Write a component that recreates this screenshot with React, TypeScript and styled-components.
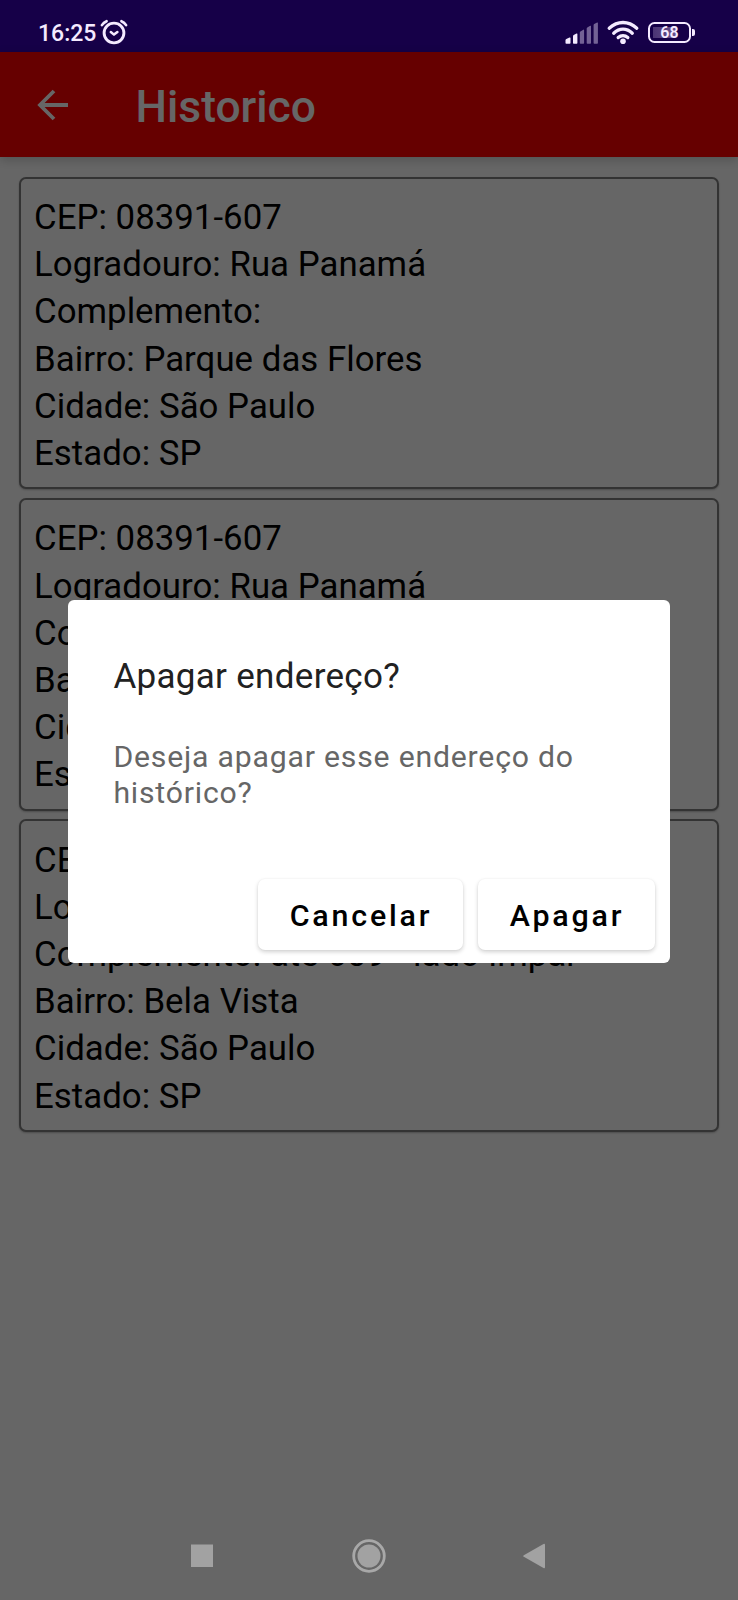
import React from "react";
import styled, { createGlobalStyle } from "styled-components";

const GlobalStyle = createGlobalStyle`
  * { box-sizing: border-box; }
  body { margin: 0; background: #fff; font-family: Roboto, "Liberation Sans", sans-serif; }
  h1, h2, p { margin: 0; font-weight: 400; }
`;

const Screen = styled.div`
  position: relative;
  width: 738px;
  height: 1600px;
  overflow: hidden;
  display: flex;
  flex-direction: column;
  background: #fff;
`;

const StatusBackdrop = styled.div`
  flex: none;
  height: 52px;
  background: #3700b3;
`;

const AppBar = styled.header`
  flex: none;
  height: 105px;
  display: flex;
  align-items: center;
  padding-left: 36px;
  background: #ff0000;
  color: #fff;
  box-shadow: 0 3px 10px rgba(0, 0, 0, 0.2);
`;

const BackIcon = styled.svg`
  width: 34px;
  height: 34px;
  margin-right: 65.5px;
`;

const Title = styled.h1`
  font-size: 44.4px;
  line-height: 50px;
  font-weight: 500;
  padding-top: 5px;
`;

const List = styled.main`
  display: flex;
  flex-direction: column;
  gap: 8.5px;
  padding: 19.5px 19px 0;
`;

const Card = styled.article`
  height: 312.8px;
  padding: 15.5px 13px 0;
  border: 2px solid #808080;
  border-radius: 7px;
  box-shadow: 0 1px 2px rgba(0, 0, 0, 0.25);
  color: #000;
  background: #fff;
`;

const Line = styled.p`
  font-size: 34.8px;
  line-height: 47.2px;
  letter-spacing: 0.02px;
  white-space: nowrap;
`;

const Scrim = styled.div`
  position: absolute;
  inset: 0;
  background: rgba(0, 0, 0, 0.6);
  display: flex;
  justify-content: center;
  align-items: flex-start;
  padding-top: 600px;
`;

const Dialog = styled.section`
  width: 602px;
  height: 363px;
  display: flex;
  flex-direction: column;
  padding: 54px 15px 13px 45.4px;
  border-radius: 6px;
  background: #fff;
`;

const DialogTitle = styled.h2`
  font-size: 35px;
  line-height: 46px;
  letter-spacing: 0.3px;
  color: #212121;
`;

const Message = styled.p`
  margin-top: 39px;
  font-size: 30.2px;
  line-height: 36px;
  letter-spacing: 0.8px;
  color: #666;
`;

const Actions = styled.div`
  margin-top: auto;
  display: flex;
  justify-content: flex-end;
  gap: 15px;
`;

const Action = styled.button<{ $width: number }>`
  width: ${(p) => p.$width}px;
  height: 71px;
  padding: 3px 0 0 1px;
  border: 0;
  border-radius: 7px;
  background: #fff;
  box-shadow: 0 2px 4px rgba(0, 0, 0, 0.18), 0 0 2px rgba(0, 0, 0, 0.05);
  font: 500 30.4px/36px Roboto, sans-serif;
  letter-spacing: 2.8px;
  color: #000;
`;

const StatusBar = styled.div`
  position: absolute;
  inset: 0 0 auto;
  height: 52px;
  display: flex;
  align-items: flex-start;
  padding: 19px 43px 0 38px;
  color: #f4eaff;
`;

const Clock = styled.span`
  font-size: 23px;
  line-height: 30px;
  font-weight: 500;
  width: 62px;
`;

const StatusIcons = styled.div`
  margin-left: auto;
  display: flex;
`;

const NavBar = styled.nav`
  position: absolute;
  inset: auto 0 0;
  height: 90px;
  display: grid;
  grid-template-columns: 161px 171px 22px;
  padding: 28px 0 0 191px;
`;

const addresses = [
  ["08391-607", "Rua Panamá", "", "Parque das Flores", "São Paulo", "SP"],
  ["08391-607", "Rua Panamá", "", "Parque das Flores", "São Paulo", "SP"],
  ["01311-000", "Avenida Paulista", "até 609 - lado ímpar", "Bela Vista", "São Paulo", "SP"],
];
const labels = ["CEP", "Logradouro", "Complemento", "Bairro", "Cidade", "Estado"];

function AlarmIcon() {
  return (
    <svg width="28" height="28" viewBox="0 0 28 28" fill="none" stroke="currentColor" strokeLinecap="round">
      <circle cx="14" cy="14" r="9.9" strokeWidth="2.9" />
      <path d="M10.8 13l3.2 2.6 3.4-2.6" strokeWidth="2.5" strokeLinejoin="round" />
      <path d="M1.9 6.2Q3.6 3.4 6.6 2.2M21.4 2.2q3 1.2 4.7 4" strokeWidth="2.6" />
    </svg>
  );
}

function SignalIcon() {
  return (
    <svg width="42" height="26" viewBox="0 0 42 26" fill="currentColor">
      <path d="M1.5 24v-2.6q0-.8.8-1.3l3.2-1.6q1-.4 1 .6V24q0 .7-.8.7H2.3q-.8 0-.8-.7z" />
      <path d="M9 24v-6.8q0-.8.7-1.2l2.8-1.5q.9-.4.9.6V24q0 .7-.7.7h-3q-.7 0-.7-.7z" />
      <g opacity=".42">
        <path d="M15.8 24V13.4q0-.7.6-1l2.9-1.7q.8-.4.8.5V24q0 .7-.7.7h-2.9q-.7 0-.7-.7z" />
        <path d="M22.7 24V9.500q0-.7.6-1l2.900-1.700q.8-.4.8.5V24q0 .7-.7.7h-2.900q-.7 0-.7-.7z" />
        <path d="M29.6 24V6q0-.7.6-1l2.900-1.500q.8-.4.8.5v20q0 .7-.7.7h-2.900q-.7 0-.7-.7z" />
      </g>
    </svg>
  );
}

function WifiIcon() {
  return (
    <svg width="34" height="26" viewBox="0 0 34 26" fill="none" stroke="currentColor" strokeWidth="3.3" strokeLinecap="round">
      <path d="M3.2 9.2Q9.5 3.5 17 3.5t13.8 5.7" />
      <path d="M7.7 14.2Q12 10.2 17 10.2t9.3 4" />
      <path d="M12.2 18.6q2.2-1.9 4.8-1.9t4.8 1.9" />
      <circle cx="17" cy="22.3" r="2.8" fill="currentColor" stroke="none" />
    </svg>
  );
}

const Battery = styled.div`
  position: relative;
  width: 43px;
  height: 21px;
  margin: 3px 4px 0 8px;
  border: 2.5px solid currentColor;
  border-radius: 6.5px;
  font-size: 16px;
  line-height: 18px;
  font-weight: 600;
  text-align: center;
  background: linear-gradient(90deg, #4a3474, #68518b) 3px 3px / 23px 11px no-repeat;
  &::after {
    content: "";
    position: absolute;
    right: -6px;
    top: 5px;
    width: 3px;
    height: 7px;
    border-radius: 0 2px 2px 0;
    background: currentColor;
  }
`;

export default function App() {
  return (
    <Screen>
      <GlobalStyle />
      <StatusBackdrop />
      <AppBar>
        <BackIcon viewBox="0 0 34 34" fill="none" stroke="currentColor" strokeWidth="3.8">
          <path d="M32 17H4M18 3L4 17l14 14" />
        </BackIcon>
        <Title>Historico</Title>
      </AppBar>
      <List>
        {addresses.map((values, i) => (
          <Card key={i}>
            {values.map((value, j) => (
              <Line key={j}>{labels[j]}: {value}</Line>
            ))}
          </Card>
        ))}
      </List>
      <Scrim>
        <Dialog role="dialog">
          <DialogTitle>Apagar endereço?</DialogTitle>
          <Message>Deseja apagar esse endereço do histórico?</Message>
          <Actions>
            <Action $width={205}>Cancelar</Action>
            <Action $width={177}>Apagar</Action>
          </Actions>
        </Dialog>
      </Scrim>
      <StatusBar>
        <Clock>16:25</Clock>
        <AlarmIcon />
        <StatusIcons>
          <SignalIcon />
          <WifiIcon />
          <Battery>68</Battery>
        </StatusIcons>
      </StatusBar>
      <NavBar>
        <svg width="22" height="36" viewBox="0 0 22 36" fill="#a2a2a2">
          <path d="M0 6.5h22v22.5H0z" />
        </svg>
        <svg width="34" height="36" viewBox="0 0 34 36">
          <circle cx="17" cy="18" r="15.3" fill="none" stroke="#a8a8a8" strokeWidth="2.8" />
          <circle cx="17" cy="18" r="11.5" fill="#a2a2a2" />
        </svg>
        <svg width="22" height="36" viewBox="0 0 22 36" fill="#a2a2a2">
          <path d="M20.5 6q1.5-.8 1.5 1v22q0 1.8-1.5 1L.8 18.8q-1.3-.8 0-1.6z" />
        </svg>
      </NavBar>
    </Screen>
  );
}
